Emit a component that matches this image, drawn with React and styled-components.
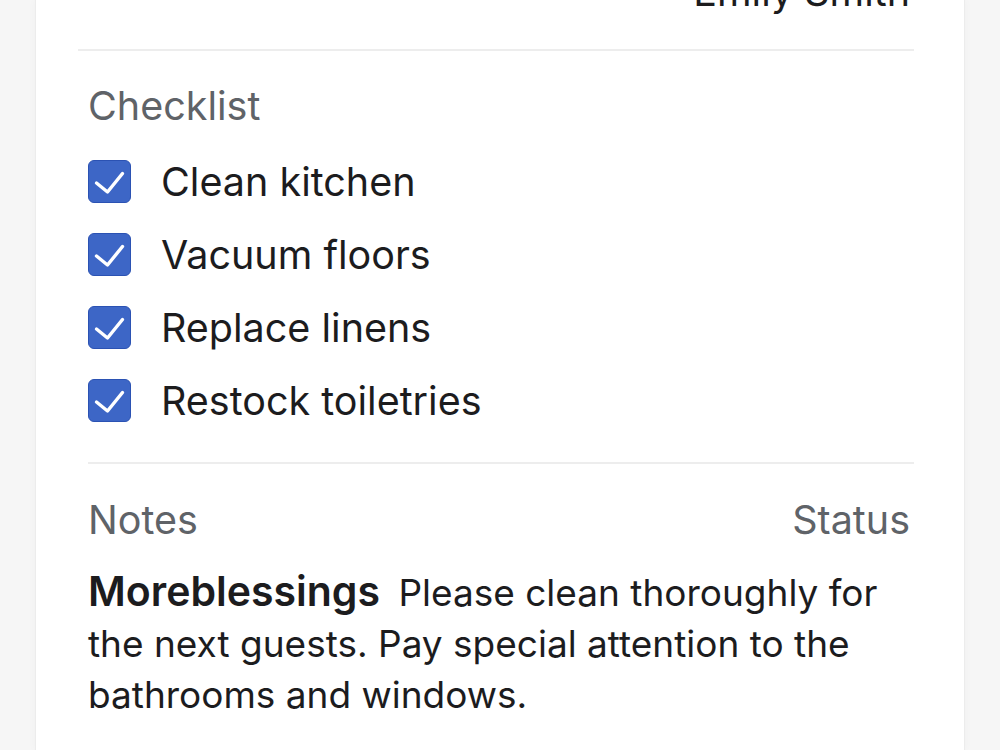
import React from "react";
import styled, { createGlobalStyle } from "styled-components";

const Global = createGlobalStyle`
  html, body { margin: 0; padding: 0; }
  body {
    background: #f6f6f6;
    font-family: Inter, "Noto Sans", "Liberation Sans", sans-serif;
    overflow: hidden;
  }
`;

const Page = styled.div`
  height: 750px;
  display: flex;
  justify-content: center;
`;

const Card = styled.div`
  width: 930px;
  box-sizing: border-box;
  background: #ffffff;
  border-left: 1px solid #ececec;
  border-right: 1px solid #ececec;
  box-shadow: 0 0 8px rgba(0, 0, 0, 0.03);
  padding: 0 50px 0 52px;
  display: flex;
  flex-direction: column;
`;

const Header = styled.div`
  margin-top: -30px;
  display: flex;
  justify-content: flex-end;
  font-size: 39.5px;
  line-height: 44px;
  color: #1c1c1e;
  padding-right: 4px;
`;

const Divider = styled.hr`
  border: 0;
  height: 2px;
  background: #ededed;
  margin: 0;
  margin-left: ${(p) => (p.$wide ? "-10px" : "0")};
`;

const SectionLabel = styled.div`
  font-size: 39.5px;
  line-height: 44px;
  color: #5f6368;
`;

const ChecklistSection = styled.section`
  display: flex;
  flex-direction: column;
  padding: 33px 0 40px;
`;

const Items = styled.ul`
  list-style: none;
  margin: 32px 0 0;
  padding: 0;
  display: flex;
  flex-direction: column;
  gap: 30px;
`;

const Item = styled.li`
  display: flex;
  align-items: center;
  gap: 30px;
  height: 43px;
  font-size: 39.5px;
  color: #1c1c1e;
`;

const Box = styled.span`
  width: 43px;
  height: 43px;
  box-sizing: border-box;
  border-radius: 6px;
  background: #3d66c6;
  border: 1.5px solid #2b52b3;
  position: relative;
  flex: none;
`;

const CheckMark = styled.svg`
  position: absolute;
  left: -1.5px;
  top: -1.5px;
`;

const NotesSection = styled.section`
  display: flex;
  flex-direction: column;
  padding-top: 34px;
`;

const NotesHead = styled.div`
  display: flex;
  justify-content: space-between;
  padding-right: 4px;
`;

const NoteText = styled.p`
  margin: 24px 0 0;
  font-size: 37px;
  line-height: 51px;
  color: #1c1c1e;
  padding-right: 10px;
`;

const Author = styled.strong`
  font-size: 41px;
  font-weight: 600;
  margin-right: 8px;
`;

const Check = () => (
  <CheckMark width="43" height="43" viewBox="0 0 43 43" fill="none">
    <path
      d="M8.5 23 L19.5 32 L34.5 13.5"
      stroke="#ffffff"
      strokeWidth="3.4"
      strokeLinecap="round"
      strokeLinejoin="round"
    />
  </CheckMark>
);

const tasks = ["Clean kitchen", "Vacuum floors", "Replace linens", "Restock toiletries"];

export default function App() {
  return (
    <>
      <Global />
      <Page>
        <Card>
          <Header>Emily Smith</Header>
          <Divider $wide style={{ marginTop: 35 }} />
          <ChecklistSection>
            <SectionLabel>Checklist</SectionLabel>
            <Items>
              {tasks.map((t) => (
                <Item key={t}>
                  <Box>
                    <Check />
                  </Box>
                  {t}
                </Item>
              ))}
            </Items>
          </ChecklistSection>
          <Divider />
          <NotesSection>
            <NotesHead>
              <SectionLabel>Notes</SectionLabel>
              <SectionLabel>Status</SectionLabel>
            </NotesHead>
            <NoteText>
              <Author>Moreblessings</Author> Please clean thoroughly for the next guests. Pay
              special attention to the bathrooms and windows.
            </NoteText>
          </NotesSection>
        </Card>
      </Page>
    </>
  );
}
